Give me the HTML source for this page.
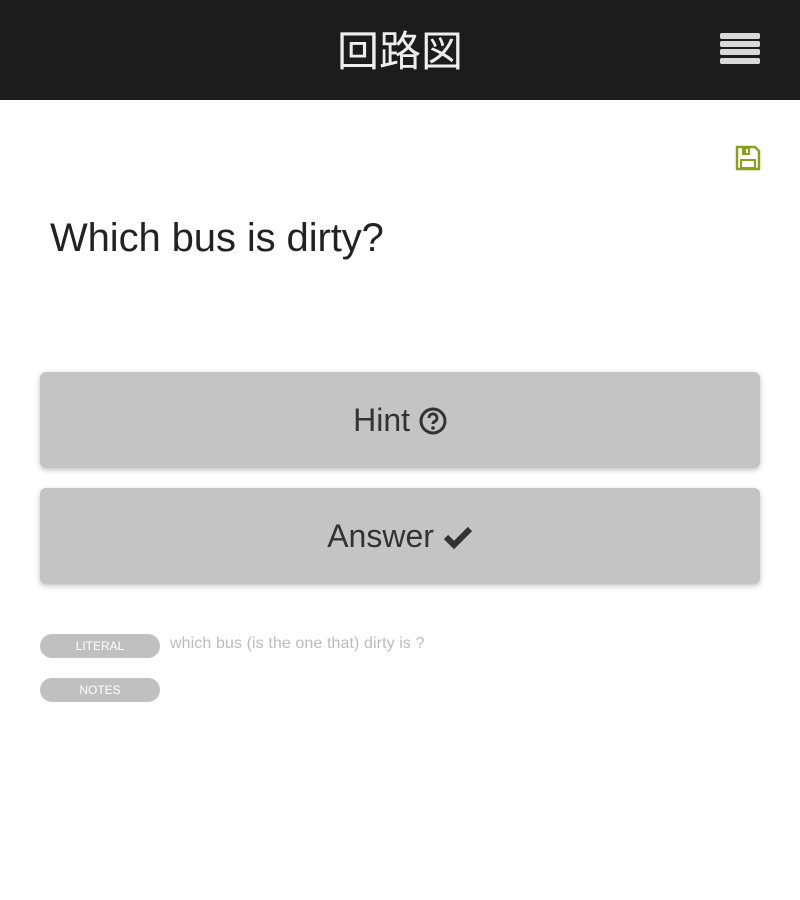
<!DOCTYPE html>
<html><head><meta charset="utf-8"><style>
body{margin:0;width:800px;height:900px;background:#fff;font-family:"Liberation Sans","Noto Sans CJK JP",sans-serif;position:relative;overflow:hidden}
.top{position:absolute;left:0;top:0;width:800px;height:100px;background:#1c1c1c}
.title{position:absolute;left:0;width:800px;top:22px;text-align:center;color:#eee;font-size:42px;line-height:54px;font-family:"Noto Sans CJK JP",sans-serif}
.bar{position:absolute;left:720px;width:40px;height:6px;border-radius:2px;background:#d8d8d8}
.q{position:absolute;left:50px;top:212px;font-size:40px;color:#222;line-height:52px;letter-spacing:-0.1px}
.btn{position:absolute;left:40px;width:720px;height:96px;background:#c4c4c4;border-radius:6px;box-shadow:0 2px 6px rgba(0,0,0,.25);text-align:center;font-size:32px;color:#333;line-height:96px}
.tag{position:absolute;left:40px;width:120px;height:24px;border-radius:12px;background:#c0c0c0;color:#fff;font-size:12px;text-align:center;line-height:24px}
.lit{position:absolute;left:170px;top:635px;font-size:16px;color:#bbb;letter-spacing:0.1px}
</style></head><body>
<div class="top"></div>
<div class="title">回路図</div>
<div class="bar" style="top:33px"></div><div class="bar" style="top:41px"></div><div class="bar" style="top:49px"></div><div class="bar" style="top:58px"></div>
<svg style="position:absolute;left:735px;top:145px" width="26" height="26" viewBox="0 0 26 26"><path d="M2 2h18l4 4v18H2z" fill="none" stroke="#8aa01c" stroke-width="2.5"/><rect x="7" y="3" width="8" height="7" fill="#8aa01c"/><rect x="11" y="4" width="2" height="4" fill="#fff"/><rect x="6" y="15" width="14" height="8" fill="none" stroke="#8aa01c" stroke-width="2"/></svg>
<div class="q">Which bus is dirty?</div>
<div class="btn" style="top:372px">Hint <svg width="28" height="28" viewBox="0 0 28 28" style="vertical-align:-4px"><circle cx="14" cy="14" r="12" fill="none" stroke="#333" stroke-width="3"/><path d="M10 11a4 4 0 1 1 5.5 3.6c-1 .5-1.5 1-1.5 2.4" fill="none" stroke="#333" stroke-width="3"/><circle cx="14" cy="21" r="1.8" fill="#333"/></svg></div>
<div class="btn" style="top:488px">Answer <svg width="30" height="26" viewBox="0 0 30 26" style="vertical-align:-3px"><path d="M3 13l8 8L27 5" fill="none" stroke="#333" stroke-width="6"/></svg></div>
<div class="tag" style="top:634px">LITERAL</div>
<div class="lit">which bus (is the one that) dirty is ?</div>
<div class="tag" style="top:678px">NOTES</div>
</body></html>
